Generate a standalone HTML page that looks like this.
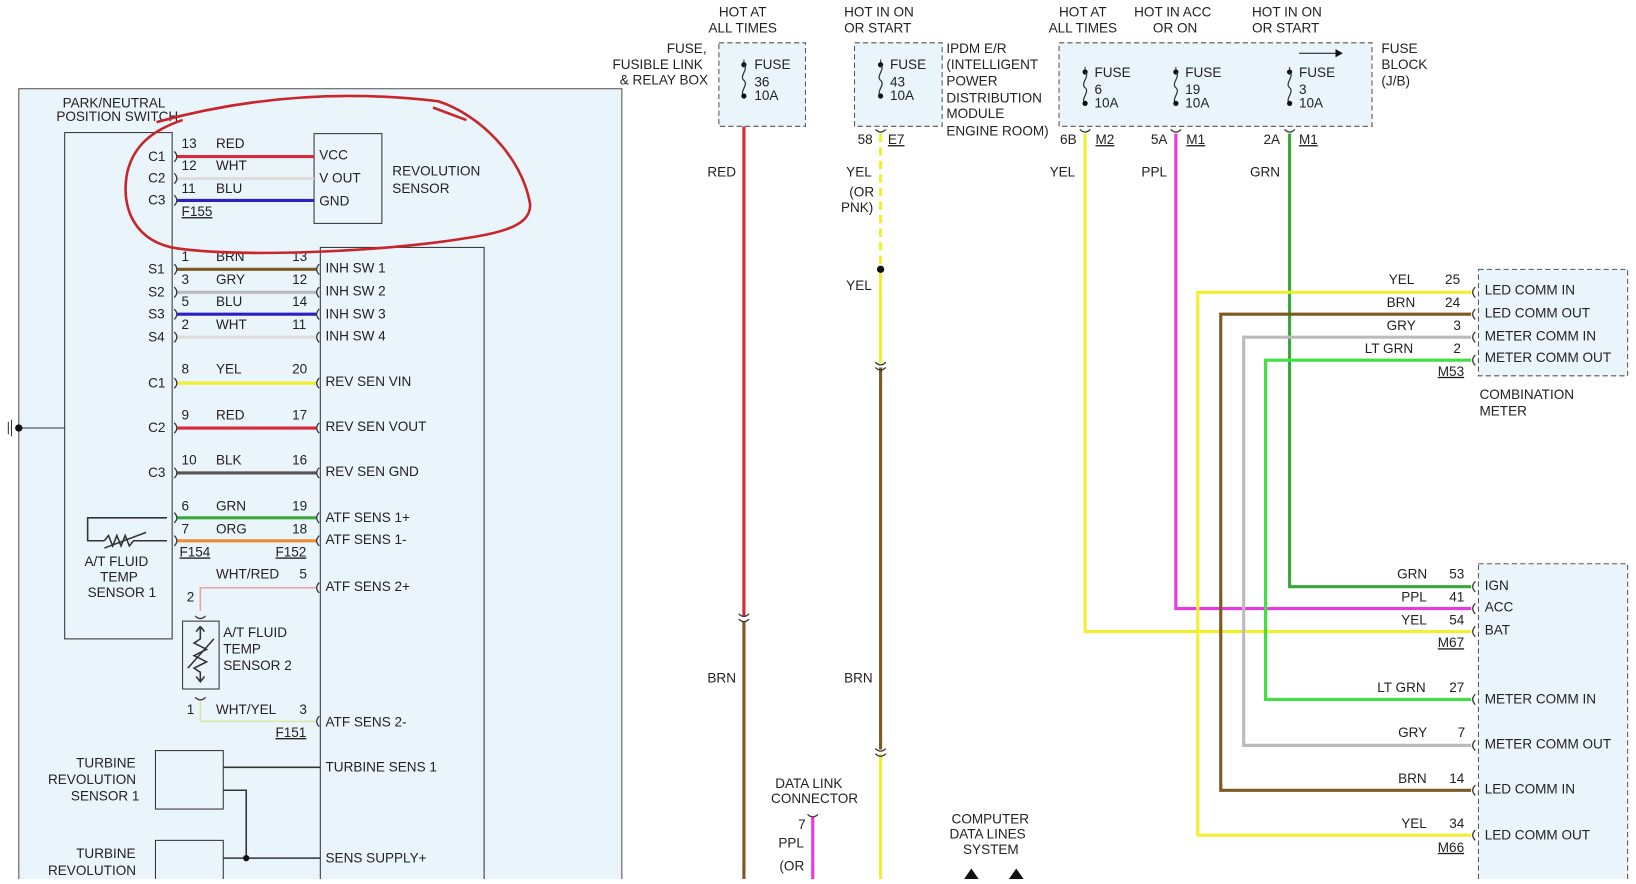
<!DOCTYPE html>
<html><head><meta charset="utf-8"><style>
html,body{margin:0;padding:0;background:#fff;overflow:hidden}
svg text{font-family:"Liberation Sans",sans-serif;font-size:13px;fill:#222}
</style></head><body>
<svg width="1636" height="879" viewBox="0 0 1568 842" preserveAspectRatio="none" xmlns="http://www.w3.org/2000/svg">
<defs>
<path id="cl" d="M0,-5 Q5,0 0,5" fill="none" stroke="#333" stroke-width="1.2"/>
<path id="cr" d="M0,-5 Q-5,0 0,5" fill="none" stroke="#333" stroke-width="1.2"/>
<path id="cd" d="M-5,0 Q0,5 5,0" fill="none" stroke="#333" stroke-width="1.2"/>
<g id="fuse"><line x1="0" y1="-20" x2="0" y2="-15" stroke="#333"/><circle cx="0" cy="-15" r="2.5" fill="#111"/><path d="M0,-15 C5,-11 -5,-4 0,0 C5,4 -5,11 0,15" fill="none" stroke="#333" stroke-width="1.2"/><circle cx="0" cy="15" r="2.5" fill="#111"/></g>
</defs>
<rect width="1568" height="842" fill="#fff"/>
<rect x="18" y="85" width="578" height="770" fill="#eaf5fb" stroke="#555" stroke-width="1"/>
<rect x="62" y="127" width="103" height="485" fill="#eaf5fb" stroke="#333"/>
<rect x="301" y="128" width="65" height="86" fill="#eaf5fb" stroke="#333"/>
<rect x="307" y="237" width="157" height="620" fill="#eaf5fb" stroke="#333"/>
<rect x="149" y="719" width="65" height="56" fill="#eaf5fb" stroke="#333"/>
<rect x="149" y="805" width="65" height="50" fill="#eaf5fb" stroke="#333"/>
<rect x="175" y="595" width="35" height="65" fill="#eaf5fb" stroke="#333"/>
<line x1="18" y1="410" x2="62" y2="410" stroke="#333"/><circle cx="18" cy="410" r="3.5" fill="#111"/>
<line x1="8" y1="404" x2="8" y2="416" stroke="#333"/><line x1="11" y1="402" x2="11" y2="418" stroke="#333"/>
<g>
<text x="60" y="103">PARK/NEUTRAL</text><text x="54" y="116">POSITION SWITCH</text>
<text x="376" y="168">REVOLUTION</text><text x="376" y="185">SENSOR</text>
<text x="306" y="153">VCC</text><text x="306" y="175">V OUT</text><text x="306" y="197">GND</text>
</g>
<g stroke-width="3" fill="none">
<line x1="170" y1="150" x2="301" y2="150" stroke="#d8283a"/>
<line x1="170" y1="171" x2="301" y2="171" stroke="#ddd"/>
<line x1="170" y1="192" x2="301" y2="192" stroke="#2a20c8"/>
<line x1="170" y1="258" x2="303" y2="258" stroke="#7a5a20"/>
<line x1="170" y1="280" x2="303" y2="280" stroke="#bbb"/>
<line x1="170" y1="301" x2="303" y2="301" stroke="#2a20c8"/>
<line x1="170" y1="323" x2="303" y2="323" stroke="#ddd"/>
<line x1="170" y1="367" x2="303" y2="367" stroke="#f0f030"/>
<line x1="170" y1="410" x2="303" y2="410" stroke="#d8283a"/>
<line x1="170" y1="453" x2="303" y2="453" stroke="#555"/>
<line x1="170" y1="496" x2="303" y2="496" stroke="#39a83a"/>
<line x1="170" y1="518" x2="303" y2="518" stroke="#f08a30"/>
</g>
<g>
<use href="#cl" x="167" y="150"/><use href="#cl" x="167" y="171"/><use href="#cl" x="167" y="192"/>
<use href="#cl" x="167" y="258"/><use href="#cl" x="167" y="280"/><use href="#cl" x="167" y="301"/><use href="#cl" x="167" y="323"/>
<use href="#cl" x="167" y="367"/><use href="#cl" x="167" y="410"/><use href="#cl" x="167" y="453"/>
<use href="#cl" x="167" y="496"/><use href="#cl" x="167" y="518"/>
<use href="#cr" x="306" y="258"/><use href="#cr" x="306" y="280"/><use href="#cr" x="306" y="301"/><use href="#cr" x="306" y="323"/>
<use href="#cr" x="306" y="367"/><use href="#cr" x="306" y="410"/><use href="#cr" x="306" y="453"/>
<use href="#cr" x="306" y="496"/><use href="#cr" x="306" y="518"/><use href="#cr" x="306" y="563"/><use href="#cr" x="306" y="691"/>
</g>
<g stroke-width="1.5" fill="none">
<polyline points="192,585 192,563 303,563" stroke="#e8a0a0"/>
<polyline points="192,672 192,691 303,691" stroke="#d8e8a0"/>
<polyline points="214,735 307,735" stroke="#333"/>
<polyline points="214,757 236,757 236,822 307,822" stroke="#333"/>
<line x1="214" y1="822" x2="236" y2="822" stroke="#333"/>
<polyline points="160,496 84,496 84,518 100,518" stroke="#333"/>
<path d="M100,518 l4,-5 4,10 4,-10 4,10 4,-10 4,10 4,-5 L160,518" stroke="#333"/>
<path d="M100,525 L140,510" stroke="#333"/>
<path d="M192,600 l-4,5 M192,600 l4,5 M192,600 L192,612 l-6,4 12,6 -12,6 12,6 -12,6 6,4 L192,652 M188,648 l4,5 4,-5" stroke="#333"/>
<path d="M180,640 L205,612" stroke="#333"/>
</g>
<use href="#cd" x="192" y="590"/><use href="#cd" x="192" y="668"/>
<circle cx="236" cy="822" r="3" fill="#111"/>
<g>
<text x="142" y="154">C1</text><text x="142" y="175">C2</text><text x="142" y="196">C3</text>
<text x="174" y="142">13</text><text x="207" y="142">RED</text>
<text x="174" y="163">12</text><text x="207" y="163">WHT</text>
<text x="174" y="185">11</text><text x="207" y="185">BLU</text>
<text x="174" y="207" text-decoration="underline">F155</text>
<text x="142" y="262">S1</text><text x="142" y="284">S2</text><text x="142" y="305">S3</text><text x="142" y="327">S4</text>
<text x="174" y="250">1</text><text x="207" y="250">BRN</text><text x="280" y="250">13</text>
<text x="174" y="272">3</text><text x="207" y="272">GRY</text><text x="280" y="272">12</text>
<text x="174" y="293">5</text><text x="207" y="293">BLU</text><text x="280" y="293">14</text>
<text x="174" y="315">2</text><text x="207" y="315">WHT</text><text x="280" y="315">11</text>
<text x="312" y="261">INH SW 1</text><text x="312" y="283">INH SW 2</text><text x="312" y="305">INH SW 3</text><text x="312" y="326">INH SW 4</text>
<text x="142" y="371">C1</text><text x="142" y="414">C2</text><text x="142" y="457">C3</text>
<text x="174" y="358">8</text><text x="207" y="358">YEL</text><text x="280" y="358">20</text>
<text x="174" y="402">9</text><text x="207" y="402">RED</text><text x="280" y="402">17</text>
<text x="174" y="445">10</text><text x="207" y="445">BLK</text><text x="280" y="445">16</text>
<text x="174" y="489">6</text><text x="207" y="489">GRN</text><text x="280" y="489">19</text>
<text x="174" y="511">7</text><text x="207" y="511">ORG</text><text x="280" y="511">18</text>
<text x="312" y="370">REV SEN VIN</text><text x="312" y="413">REV SEN VOUT</text><text x="312" y="456">REV SEN GND</text>
<text x="312" y="500">ATF SENS 1+</text><text x="312" y="521">ATF SENS 1-</text>
<text x="172" y="533" text-decoration="underline">F154</text><text x="264" y="533" text-decoration="underline">F152</text>
<text x="207" y="554">WHT/RED</text><text x="287" y="554">5</text><text x="312" y="566">ATF SENS 2+</text>
<text x="179" y="576">2</text>
<text x="214" y="610">A/T FLUID</text><text x="214" y="626">TEMP</text><text x="214" y="642">SENSOR 2</text>
<text x="81" y="542">A/T FLUID</text><text x="96" y="557">TEMP</text><text x="84" y="572">SENSOR 1</text>
<text x="179" y="684">1</text><text x="207" y="684">WHT/YEL</text><text x="287" y="684">3</text>
<text x="312" y="696">ATF SENS 2-</text><text x="264" y="706" text-decoration="underline">F151</text>
<text x="73" y="735">TURBINE</text><text x="46" y="751">REVOLUTION</text><text x="68" y="767">SENSOR 1</text>
<text x="312" y="739">TURBINE SENS 1</text>
<text x="73" y="822">TURBINE</text><text x="46" y="838">REVOLUTION</text>
<text x="312" y="826">SENS SUPPLY+</text>
</g>
<path d="M150,117 C230,95 320,85 420,97 C460,110 500,150 508,195 C510,220 470,225 420,232 C340,242 230,246 170,238 C130,232 115,200 122,165 C128,140 145,125 175,115 M447,115 L415,103" fill="none" stroke="#c8262a" stroke-width="2.5"/>
<g fill="#eaf5fb" stroke="#555" stroke-dasharray="5,3">
<rect x="689" y="41" width="83" height="80"/>
<rect x="819" y="41" width="84" height="80"/>
<rect x="1015" y="41" width="300" height="80"/>
<rect x="1417" y="258" width="143" height="102"/>
<rect x="1417" y="540" width="143" height="320"/>
</g>
<use href="#fuse" x="713" y="77"/><use href="#fuse" x="844" y="77"/>
<use href="#fuse" x="1040" y="84"/><use href="#fuse" x="1127" y="84"/><use href="#fuse" x="1236" y="84"/>
<g>
<text x="689" y="16">HOT AT</text><text x="679" y="31">ALL TIMES</text>
<text x="809" y="16">HOT IN ON</text><text x="809" y="31">OR START</text>
<text x="1015" y="16">HOT AT</text><text x="1005" y="31">ALL TIMES</text>
<text x="1087" y="16">HOT IN ACC</text><text x="1105" y="31">OR ON</text>
<text x="1200" y="16">HOT IN ON</text><text x="1200" y="31">OR START</text>
<text x="639" y="51">FUSE,</text><text x="587" y="66">FUSIBLE LINK</text><text x="594" y="81">&amp; RELAY BOX</text>
<text x="723" y="66">FUSE</text><text x="723" y="83">36</text><text x="723" y="96">10A</text>
<text x="853" y="66">FUSE</text><text x="853" y="83">43</text><text x="853" y="96">10A</text>
<text x="907" y="51">IPDM E/R</text><text x="907" y="66">(INTELLIGENT</text><text x="907" y="82">POWER</text><text x="907" y="98">DISTRIBUTION</text><text x="907" y="113">MODULE</text><text x="907" y="130">ENGINE ROOM)</text>
<text x="1049" y="74">FUSE</text><text x="1049" y="90">6</text><text x="1049" y="103">10A</text>
<text x="1136" y="74">FUSE</text><text x="1136" y="90">19</text><text x="1136" y="103">10A</text>
<text x="1245" y="74">FUSE</text><text x="1245" y="90">3</text><text x="1245" y="103">10A</text>
<text x="1324" y="51">FUSE</text><text x="1324" y="66">BLOCK</text><text x="1324" y="82">(J/B)</text>
<text x="822" y="138">58</text><text x="851" y="138" text-decoration="underline">E7</text>
<text x="1016" y="138">6B</text><text x="1050" y="138" text-decoration="underline">M2</text>
<text x="1103" y="138">5A</text><text x="1137" y="138" text-decoration="underline">M1</text>
<text x="1211" y="138">2A</text><text x="1245" y="138" text-decoration="underline">M1</text>
<text x="678" y="169">RED</text><text x="811" y="169">YEL</text><text x="814" y="188">(OR</text><text x="806" y="203">PNK)</text>
<text x="1006" y="169">YEL</text><text x="1094" y="169">PPL</text><text x="1198" y="169">GRN</text>
<text x="811" y="278">YEL</text>
<text x="678" y="654">BRN</text><text x="809" y="654">BRN</text>
<text x="743" y="755">DATA LINK</text><text x="739" y="769">CONNECTOR</text>
<text x="765" y="794">7</text><text x="746" y="812">PPL</text><text x="747" y="834">(OR</text>
<text x="912" y="789">COMPUTER</text><text x="910" y="803">DATA LINES</text><text x="923" y="818">SYSTEM</text>
</g>
<line x1="1245" y1="51" x2="1285" y2="51" stroke="#111"/><path d="M1280,47 L1287,51 L1280,55Z" fill="#111"/>
<g stroke-width="3" fill="none">
<line x1="713" y1="121" x2="713" y2="590" stroke="#d8283a"/>
<line x1="713" y1="595" x2="713" y2="845" stroke="#7a5a20"/>
<line x1="844" y1="128" x2="844" y2="258" stroke="#f0f030" stroke-dasharray="8,5"/>
<line x1="844" y1="258" x2="844" y2="348" stroke="#f0f030"/>
<line x1="844" y1="352" x2="844" y2="718" stroke="#7a5a20"/>
<line x1="844" y1="722" x2="844" y2="845" stroke="#f0f030"/>
<line x1="779" y1="783" x2="779" y2="845" stroke="#e838e0"/>
<polyline points="1040,128 1040,605 1410,605" stroke="#f0f030"/>
<polyline points="1127,128 1127,583 1410,583" stroke="#e838e0"/>
<polyline points="1236,128 1236,562 1410,562" stroke="#39a83a"/>
<polyline points="1410,280 1148,280 1148,800 1410,800" stroke="#f0f030"/>
<polyline points="1410,301 1170,301 1170,757 1410,757" stroke="#7a5a20"/>
<polyline points="1410,323 1192,323 1192,714 1410,714" stroke="#bbb"/>
<polyline points="1410,345 1213,345 1213,670 1410,670" stroke="#40e040"/>
</g>
<g>
<use href="#cd" x="844" y="124"/><use href="#cd" x="1040" y="124"/><use href="#cd" x="1127" y="124"/><use href="#cd" x="1236" y="124"/>
<use href="#cd" x="713" y="588"/><use href="#cd" x="713" y="593"/><use href="#cd" x="844" y="347"/><use href="#cd" x="844" y="352"/>
<use href="#cd" x="844" y="717"/><use href="#cd" x="844" y="722"/><use href="#cd" x="779" y="780"/>
<use href="#cr" x="1414" y="280"/><use href="#cr" x="1414" y="301"/><use href="#cr" x="1414" y="323"/><use href="#cr" x="1414" y="345"/>
<use href="#cr" x="1414" y="562"/><use href="#cr" x="1414" y="583"/><use href="#cr" x="1414" y="605"/>
<use href="#cr" x="1414" y="670"/><use href="#cr" x="1414" y="714"/><use href="#cr" x="1414" y="757"/><use href="#cr" x="1414" y="800"/>
</g>
<circle cx="844" cy="258" r="3.5" fill="#111"/>
<path d="M924,842 L931,832 L938,842Z M967,842 L974,832 L981,842Z" fill="#111"/>
<g>
<text x="1331" y="272">YEL</text><text x="1385" y="272">25</text>
<text x="1329" y="294">BRN</text><text x="1385" y="294">24</text>
<text x="1329" y="316">GRY</text><text x="1393" y="316">3</text>
<text x="1308" y="338">LT GRN</text><text x="1393" y="338">2</text>
<text x="1378" y="360" text-decoration="underline">M53</text>
<text x="1423" y="282">LED COMM IN</text><text x="1423" y="304">LED COMM OUT</text>
<text x="1423" y="326">METER COMM IN</text><text x="1423" y="347">METER COMM OUT</text>
<text x="1418" y="382">COMBINATION</text><text x="1418" y="398">METER</text>
<text x="1339" y="554">GRN</text><text x="1389" y="554">53</text>
<text x="1343" y="576">PPL</text><text x="1389" y="576">41</text>
<text x="1343" y="598">YEL</text><text x="1389" y="598">54</text>
<text x="1378" y="620" text-decoration="underline">M67</text>
<text x="1423" y="565">IGN</text><text x="1423" y="586">ACC</text><text x="1423" y="608">BAT</text>
<text x="1320" y="663">LT GRN</text><text x="1389" y="663">27</text><text x="1423" y="674">METER COMM IN</text>
<text x="1340" y="706">GRY</text><text x="1397" y="706">7</text><text x="1423" y="717">METER COMM OUT</text>
<text x="1340" y="750">BRN</text><text x="1389" y="750">14</text><text x="1423" y="760">LED COMM IN</text>
<text x="1343" y="793">YEL</text><text x="1389" y="793">34</text><text x="1423" y="804">LED COMM OUT</text>
<text x="1378" y="816" text-decoration="underline">M66</text>
</g>
</svg>
</body></html>
